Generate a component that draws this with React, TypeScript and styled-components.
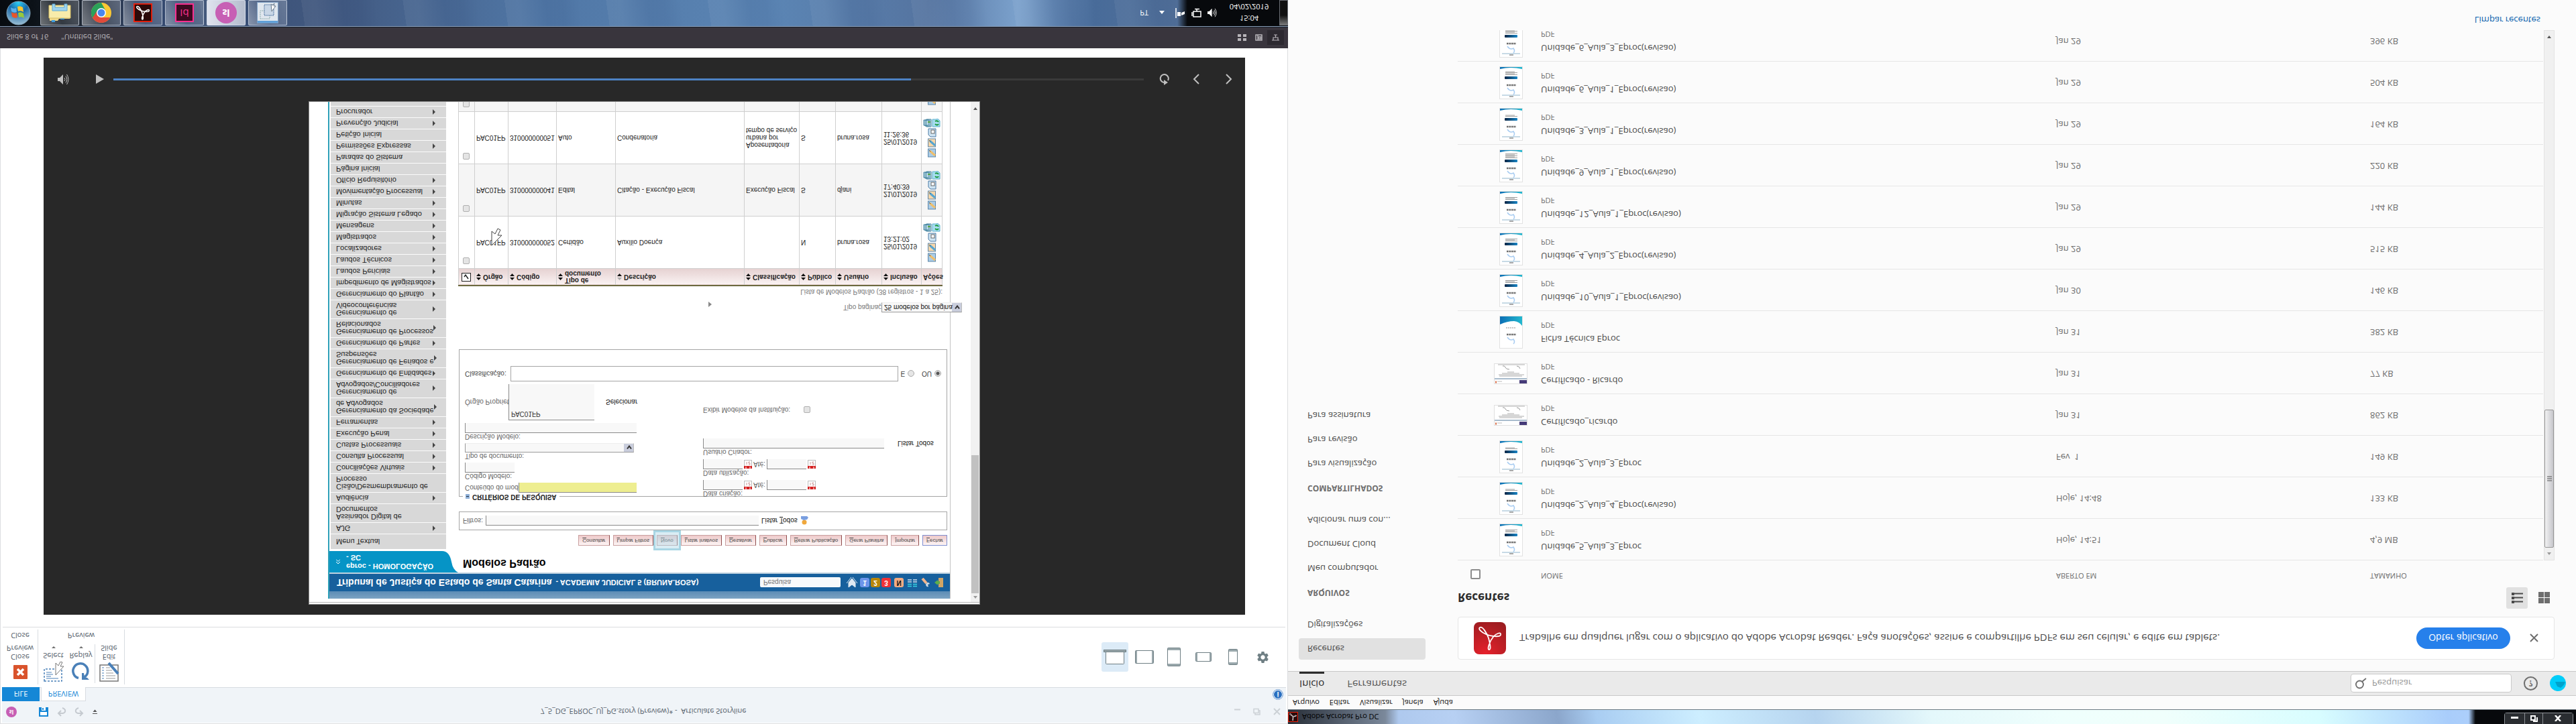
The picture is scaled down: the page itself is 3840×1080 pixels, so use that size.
import React from "react";
import styled, { createGlobalStyle, css } from "styled-components";
import { MdSettings } from "react-icons/md";

const ui = `"Open Sans", "Noto Sans", sans-serif`;
const web = `"Liberation Sans", Arial, sans-serif`;

const Global = createGlobalStyle`
  *, *::before, *::after { box-sizing: border-box; }
  html, body { margin: 0; background: #fff; }
  button, input, select { font: inherit; color: inherit; margin: 0; border-radius: 0; }
  button { border: 0; background: none; padding: 0; }
  svg { display: block; flex: none; }
  a { color: inherit; text-decoration: none; }
`;

/* Both desktops are mirrored top to bottom */
const Desktop = styled.div`
  display: grid;
  grid-template-columns: 1fr 1fr;
  height: 100vh;
  overflow: hidden;
  transform: scaleY(-1);
  font-family: ${ui};
`;

/* ---------- Storyline window ---------- */
const Screen = styled.section`
  display: flex;
  flex-direction: column;
  min-width: 0;
  min-height: 0;
  background: #fff;
`;
const StoryWindow = styled.div`
  flex: 1;
  min-height: 0;
  display: flex;
  flex-direction: column;
  border: 1px solid #dcdee0;
  border-bottom: 0;
`;
const TitleBar = styled.header`
  display: grid;
  grid-template-columns: 1fr auto 1fr;
  align-items: center;
  height: 32px;
  margin: 1px 2px 0;
  padding: 0 8px 0 6px;
  background: #f0f4f8;
  color: #56616b;
  font-size: 11px;
  white-space: pre;
`;
const QuickAccess = styled.div`
  display: flex;
  align-items: center;
  gap: 12px;
  button:first-of-type { margin-left: 21px; }
`;
const SlBadge = styled.span<{ $size: number }>`
  display: grid;
  place-items: center;
  width: ${(p) => p.$size}px;
  height: ${(p) => p.$size}px;
  border-radius: 50%;
  background: #c75fb4;
  color: #fff;
  font-size: ${(p) => (p.$size > 20 ? 14 : 8)}px;
  font-weight: 700;
  line-height: 1;
`;
const WindowButtons = styled.div`
  display: flex;
  justify-content: flex-end;
  align-items: center;
  gap: 19px;
`;
const TabBar = styled.nav`
  display: flex;
  align-items: stretch;
  gap: 2px;
  height: 21px;
  margin: 0 2px;
  background: #f0f4f8;
  border-bottom: 1px solid #d8dce1;
`;
const RibbonTab = styled.button<{ $file?: boolean }>`
  height: 21px;
  font-size: 11px;
  line-height: 20px;
  ${(p) =>
    p.$file
      ? css`width: 56px; background: #1587d6; color: #fff;`
      : css`width: 67px; background: #fff; color: #1587d6; border: 1px solid #d8dce1; border-bottom: 0;`}
`;
const InfoDot = styled.span`
  display: grid;
  place-items: center;
  width: 16px;
  height: 16px;
  margin: 2px 4px 0 auto;
  border-radius: 50%;
  border: 1px solid #8fb3dd;
  box-shadow: inset 0 0 0 1px #fff;
  background: #2a6fc0;
  color: #fff;
  font-size: 10px;
  font-weight: 700;
  line-height: 1;
`;
const Ribbon = styled.div`
  display: flex;
  height: 90px;
  margin: 0 3px;
  border-bottom: 1px solid #dadcde;
  font-size: 11px;
  color: #56616b;
`;
const RibbonGroup = styled.div<{ $w: number }>`
  display: flex;
  flex-direction: column;
  align-items: center;
  width: ${(p) => p.$w}px;
  margin: 4px 0 3px;
  border-right: 1px solid #d8dce1;
  padding-top: 2px;
`;
const RibbonTools = styled.div`
  display: flex;
  flex: 1;
`;
const RibbonTool = styled.button<{ $w: number; $line?: boolean }>`
  display: flex;
  flex-direction: column;
  align-items: center;
  width: ${(p) => p.$w}px;
  height: 58px;
  line-height: 13px;
  border-right: ${(p) => (p.$line ? "1px solid #d8dce1" : "0")};
`;
const ToolIcon = styled.span`
  display: grid;
  place-items: center;
  height: 34px;
`;
const DownArrow = styled.span`
  width: 0;
  margin-top: 5px;
  border: 3px solid transparent;
  border-top-color: #707070;
  border-bottom: 0;
`;
const GroupName = styled.span`
  line-height: 18px;
`;
const DeviceBar = styled.div`
  display: flex;
  align-items: center;
  gap: 4px;
  margin: 0 14px 0 auto;
`;
const DeviceButton = styled.button<{ $active?: boolean }>`
  display: grid;
  place-items: center;
  width: 40px;
  height: 44px;
  border-radius: 3px;
  background: ${(p) => (p.$active ? "#dcebf7" : "transparent")};
  color: #76858a;
`;
const Player = styled.main`
  flex: 1;
  min-height: 0;
  display: flex;
  flex-direction: column;
  margin: 18px 63px 14px 64px;
  padding-top: 15px;
  background: #282828;
`;
const Controls = styled.div`
  display: flex;
  align-items: center;
  flex: none;
  height: 65px;
  padding: 0 5px 0 21px;
  color: #bfbfbf;
`;
const ControlButton = styled.button<{ $w: number }>`
  display: grid;
  place-items: center;
  width: ${(p) => p.$w}px;
  height: 24px;
`;
const PlayButton = styled(ControlButton)`
  justify-content: end;
  padding-right: 3px;
`;
const SeekBar = styled.div`
  flex: 1;
  height: 3px;
  margin: 0 12px 0 11px;
  background: #3a3a3a;
`;
const Played = styled.div`
  height: 3px;
  background: #4d82c4;
`;
const StatusBar = styled.footer`
  display: flex;
  align-items: center;
  gap: 19px;
  height: 32px;
  padding: 0 6px 0 10px;
  background: #39353d;
  color: #b7b4b9;
  font-size: 11px;
`;
const ViewButtons = styled.div`
  display: flex;
  margin-left: auto;
`;
const ViewButton = styled.button<{ $active?: boolean }>`
  display: grid;
  place-items: center;
  width: 25px;
  height: 22px;
  background: ${(p) => (p.$active ? "#2c2930" : "transparent")};
  color: #b7b4b9;
`;

/* ---------- Taskbar ---------- */
const Taskbar = styled.nav`
  display: flex;
  align-items: center;
  height: 40px;
  flex: none;
  padding-left: 9px;
  border-top: 1px solid #8d9fb8;
  box-shadow: 0 -1px 0 #141c28;
  background:
    linear-gradient(90deg, #070b10 0, #0c1218 50px, rgba(30,36,44,0.8) 130px, transparent 220px),
    linear-gradient(90deg, transparent 0, transparent calc(100% - 165px), #07090c calc(100% - 150px)),
    repeating-linear-gradient(98deg, rgba(255,255,255,0.05) 0 20px, rgba(20,40,90,0.07) 60px 85px, transparent 110px 150px),
    linear-gradient(90deg, #2b3d60 0, #41587f 25%, #5077a6 42%, #5b85b4 60%, #5574a0 72%, #7ba1cc 79%, #486b99 85%, #60799c 100%);
`;
const TaskButton = styled.button<{ $active?: boolean }>`
  display: grid;
  place-items: center;
  width: 58px;
  height: 38px;
  margin-right: 4px;
  border: 1px solid rgba(220, 228, 240, 0.65);
  border-radius: 2px;
  background: ${(p) =>
    p.$active
      ? "linear-gradient(90deg, #dfe3ee, #b4bccd)"
      : "linear-gradient(115deg, rgba(255,255,255,0.4), rgba(255,255,255,0.12) 45%, rgba(255,255,255,0.22))"};
`;
const StartButton = styled.button`
  width: 37px;
  margin-right: 14px;
`;
const Tray = styled.div`
  display: flex;
  align-items: center;
  gap: 9px;
  margin-left: auto;
  color: #fff;
  font-size: 11px;
`;
const Clock = styled.time`
  display: flex;
  flex-direction: column;
  align-items: center;
  width: 72px;
  margin-left: 3px;
  line-height: 17px;
`;
const ShowDesktop = styled.button`
  width: 13px;
  height: 38px;
  border: 1px solid #6a6e75;
  background: linear-gradient(#777, #111 40%);
`;

/* ---------- Slide: court web page ---------- */
const Slide = styled.article`
  width: 100%;
  max-width: 1001px;
  margin: 0 auto;
  flex: 1;
  min-height: 0;
  overflow: hidden;
  border: 1px solid #8a8a8a;
  padding-top: 2px;
  background: #fff;
  color: #1d1d1d;
  font-family: ${web};
  font-size: 10px;
`;
const Viewport = styled.div`
  display: flex;
  height: 100%;
  border-top: 1px solid #b5b5b5;
`;
const CourtPage = styled.div`
  flex: 1;
  min-width: 0;
  margin: 5px 30px 0 28px;
  border-left: 2px solid #2fa0b8;
  border-right: 1px solid #c4c4c4;
`;
const SlideScroll = styled.div`
  display: flex;
  flex-direction: column;
  align-items: center;
  width: 13px;
  padding: 5px 0 8px;
  background: #f1f1f1;
`;
const SlideThumb = styled.div`
  width: 11px;
  height: 206px;
  margin: 4px 0 auto;
  background: #c1c1c1;
`;
const Arrow = styled.span<{ $down?: boolean }>`
  width: 0;
  border: 3px solid transparent;
  ${(p) => (p.$down ? "border-top: 4px solid #555; border-bottom: 0;" : "border-bottom: 4px solid #999; border-top: 0;")}
`;
const HeadStrip = styled.div`
  height: 11px;
  background: linear-gradient(#7ca3c3, #5c8cb5);
`;
const CourtHead = styled.div`
  display: flex;
  align-items: center;
  height: 28px;
  padding: 0 10px 0 11px;
  border-bottom: 2px solid #bfd2e0;
  background: #17609d;
  color: #fff;
  font-size: 11px;
  font-weight: 700;
  white-space: nowrap;
`;
const CourtName = styled.h1`
  margin: 0 6px 0 0;
  font-size: 14px;
`;
const CourtSearch = styled.input`
  width: 120px;
  height: 15px;
  margin: 0 8px 0 auto;
  padding: 0 5px;
  border: 0;
  border-radius: 2px;
  background: #f7f9fb;
  font-size: 10px;
  font-weight: 400;
`;
const Level = styled.span<{ $bg: string; $fg?: string }>`
  width: 14px;
  height: 14px;
  margin-right: 2px;
  border-radius: 3px;
  background: ${(p) => p.$bg};
  color: ${(p) => p.$fg || "#fff"};
  font-size: 10px;
  line-height: 14px;
  text-align: center;
`;
const HeadIcons = styled.span`
  display: flex;
  gap: 6px;
  margin-left: 4px;
`;
const CourtBody = styled.div`
  display: grid;
  grid-template-columns: 192px 1fr;
`;
const SystemTab = styled.div`
  display: flex;
  align-items: center;
  gap: 9px;
  height: 32px;
  padding-left: 10px;
  background: #0694c6;
  clip-path: path("M0 0H192Q184 4 182 16Q179 32 168 32H0Z");
  color: #fff;
  font-size: 11px;
  font-weight: 700;
  line-height: 13px;
`;
const MenuList = styled.ul`
  width: 172px;
  margin: 3px 0 0 2px;
  padding: 0;
  list-style: none;
  font-size: 11px;
  line-height: 11px;
`;
const MenuItem = styled.li<{ $h: number }>`
  display: flex;
  align-items: center;
  justify-content: space-between;
  height: ${(p) => p.$h}px;
  padding: 0 16px 0 8px;
  border-bottom: 1px solid #fbfbfb;
  background: #d8d8d8;
  white-space: pre;
`;
const MenuArrow = styled.span`
  width: 0;
  border: 4px solid transparent;
  border-left-color: #444;
  border-right: 0;
`;
const Content = styled.div`
  padding-right: 4px;
`;
const PageTitle = styled.h2`
  margin: 0 0 12px 7px;
  color: #000;
  font-size: 16px;
  line-height: 28px;
`;
const Actions = styled.div`
  display: flex;
  justify-content: flex-end;
  gap: 5px;
`;
const ActionButton = styled.button<{ $focus?: boolean }>`
  position: relative;
  height: 16px;
  padding: 0 5px;
  border: 1px solid ${(p) => (p.$focus ? "#7f8fd0" : "#c9a0a0")};
  border-right-color: ${(p) => (p.$focus ? "#7f8fd0" : "#8f4d4d")};
  background: linear-gradient(#fdf5f5, #eec9c9);
  color: #444;
  font-size: 8px;
  line-height: 12px;
  white-space: nowrap;
  &::first-letter { text-decoration: underline; }
`;
const Highlight = styled.span`
  position: absolute;
  inset: -8px -6px;
  border: 3px solid #a9d6e4;
  background: rgba(173, 216, 230, 0.45);
`;
const FilterBox = styled.div`
  display: flex;
  align-items: center;
  gap: 4px;
  height: 28px;
  margin: 7px 0 16px 1px;
  padding: 0 5px;
  border: 1px solid #a5a5a5;
  color: #666;
  font-size: 10px;
`;
const Field = styled.input<{ $w?: number; $yellow?: boolean }>`
  width: ${(p) => (p.$w ? p.$w + "px" : "100%")};
  height: 15px;
  padding: 0 3px;
  border: 0;
  border-left: 1px solid #8a8a8a;
  border-top: 1px solid #8a8a8a;
  background: ${(p) => (p.$yellow ? "#eeee90" : "#f8f8f8")};
`;
const TextLink = styled.a`
  color: #111;
  white-space: nowrap;
`;
const Criteria = styled.fieldset`
  display: block;
  min-width: 0;
  margin: 0 0 55px 1px;
  padding: 0 8px 24px;
  border: 1px solid #a5a5a5;
  color: #666;
  font-size: 10px;
  line-height: 11px;
`;
const CriteriaTitle = styled.legend`
  display: flex;
  align-items: center;
  gap: 4px;
  margin-left: -3px;
  padding: 0 4px;
  color: #222;
  font-weight: 700;
  line-height: 12px;
`;
const FormColumns = styled.div`
  display: grid;
  grid-template-columns: 355px 1fr;
`;
const FormColumn = styled.div<{ $lift?: boolean }>`
  display: flex;
  flex-direction: column;
  gap: ${(p) => (p.$lift ? 5 : 4)}px;
  margin-top: ${(p) => (p.$lift ? "-7px" : "0")};
`;
const FieldGroup = styled.div<{ $top?: number }>`
  display: flex;
  flex-direction: column;
  align-items: flex-start;
  margin-top: ${(p) => p.$top || 0}px;
`;
const Inline = styled.div<{ $gap?: number }>`
  display: flex;
  align-items: center;
  gap: ${(p) => p.$gap || 0}px;
  label { white-space: nowrap; flex: none; }
`;
const FixedLabel = styled.label<{ $w: number }>`
  width: ${(p) => p.$w}px;
`;
const selectLook = css`
  appearance: none;
  padding: 0 3px;
  border: 1px solid #9a9a9a;
  border-right-color: #bbb;
  border-bottom-color: #eee;
  background: #f8f8f8 linear-gradient(#c9cddc, #c9cddc) right / 14px 100% no-repeat;
  color: #111;
`;
const SelectWrap = styled.span`
  position: relative;
  display: inline-flex;
  svg { position: absolute; right: 3px; top: 4px; }
`;
const TypeSelect = styled.select`
  ${selectLook}
  width: 252px;
  height: 14px;
`;
const PageSelect = styled.select`
  ${selectLook}
  width: 120px;
  height: 15px;
`;
const OwnerList = styled.div`
  width: 128px;
  height: 54px;
  margin-right: 17px;
  padding: 3px;
  border-left: 1px solid #8a8a8a;
  border-top: 1px solid #8a8a8a;
  background: #f8f8f8;
  color: #333;
`;
const ClassRow = styled.div`
  display: flex;
  align-items: center;
  gap: 4px;
  margin-top: 4px;
  label { color: #444; white-space: nowrap; }
`;
const ClassInput = styled.input`
  flex: 1;
  min-width: 0;
  height: 23px;
  border: 1px solid #a5a5a5;
`;
const Radio = styled.input`
  appearance: none;
  width: 10px;
  height: 10px;
  border: 1px solid #a9a9a9;
  border-radius: 50%;
  background: #e6e6e6;
  &:checked { background: radial-gradient(#555 0 2px, #ddd 3px); }
`;
const Check = styled.input`
  appearance: none;
  display: block;
  width: 10px;
  height: 10px;
  border: 1px solid #b0b0b0;
  border-radius: 2px;
  background: #e4e4e4;
`;
const Paging = styled.div`
  display: flex;
  align-items: center;
  height: 14px;
  margin-right: -22px;
  color: #777;
  label { margin-left: auto; }
`;
const PagingMark = styled.span`
  margin: 10px 0 0 373px;
  border: 4px solid transparent;
  border-left: 5px solid #888;
  border-right: 0;
`;
const Models = styled.table`
  width: 722px;
  border-collapse: collapse;
  table-layout: fixed;
  caption {
    padding: 10px 0 1px;
    color: #777;
    line-height: 14px;
    text-align: right;
  }
  th, td { border: 1px solid #cfcfcf; padding: 0 2px; text-align: left; }
  tr { height: 78px; }
  thead tr { height: 25px; background: linear-gradient(#faf2f2, #e6d2d2); border-top: 2px solid #6d6a3f; }
  th { line-height: 10px; white-space: pre; color: #222; }
  th:first-child { padding-left: 4px; }
  tbody tr:nth-child(even) { background: #f5f5f5; }
`;
const HeadCell = styled.span`
  display: flex;
  align-items: center;
  gap: 3px;
`;
const CheckCell = styled.td`
  vertical-align: top;
  input { margin: 6px 0 0 4px; }
`;
const RowActions = styled.div`
  display: flex;
  flex-wrap: wrap;
  justify-content: center;
  gap: 1px 0;
  margin: 0 -2px;
  button { width: 13px; height: 14px; }
  button:nth-child(-n + 3) { margin: 0 8px; }
`;
const Cursor = styled.svg`
  position: absolute;
  left: 22px;
  top: 0;
`;
const CursorCell = styled.span`
  position: relative;
  display: block;
`;

/* ---------- Acrobat window ---------- */
const AcrobatScreen = styled(Screen)`
  background: #fbfbfb;
  color: #4b4b4b;
  font-size: 13px;
`;
const GlassBar = styled.header`
  display: flex;
  align-items: center;
  gap: 6px;
  height: 22px;
  flex: none;
  border-bottom: 1px solid #6f7c84;
  background:
    linear-gradient(90deg, rgba(20,22,26,0.85) 0, rgba(90,95,100,0.6) 145px, transparent 165px),
    linear-gradient(90deg, transparent calc(100% - 160px), #07090c calc(100% - 150px)),
    linear-gradient(100deg, #9dbbe4 0, #b7d0f3 13%, #8ba6cb 21%, #a9cdf2 24%, #cdeeff 32%, #b6d4ef 41%, #e4f8fb 50%, #effffd 60%, #f0fffc 68%, #d8fdff 80%, #a9cdfb 90%, #bbd5fa 100%);
  color: #000;
  font-size: 11px;
`;
const GlassButtons = styled.div`
  display: flex;
  align-self: stretch;
  margin: 0 4px 4px auto;
  border: 1px solid #8b8f94;
  border-top: 0;
  border-radius: 0 0 4px 4px;
`;
const GlassButton = styled.button<{ $w: number }>`
  display: grid;
  place-items: center;
  width: ${(p) => p.$w}px;
  background: #2a2d31;
  & + & { border-left: 1px solid #8b8f94; }
`;
const MenuBar = styled.nav`
  display: flex;
  gap: 15px;
  height: 20px;
  flex: none;
  padding-left: 7px;
  color: #111;
  font-size: 11px;
  line-height: 20px;
`;
const AppBar = styled.div`
  display: flex;
  align-items: center;
  height: 37px;
  flex: none;
  padding: 0 15px 0 17px;
  border: solid #c8c8c8;
  border-width: 1px 0;
  background: #eaeaea;
  font-size: 15px;
`;
const AppTab = styled.button<{ $active?: boolean }>`
  height: 35px;
  margin-right: 34px;
  color: ${(p) => (p.$active ? "#2c2c2c" : "#5a5a5a")};
  border-bottom: 3px solid ${(p) => (p.$active ? "#2c2c2c" : "transparent")};
`;
const SearchBox = styled.label`
  display: flex;
  align-items: center;
  gap: 8px;
  width: 240px;
  height: 28px;
  margin: 0 18px 0 auto;
  padding: 0 6px;
  border: 1px solid #cacaca;
  border-radius: 4px;
  background: #fff;
  input { width: 180px; border: 0; padding: 0; font-size: 13px; outline: 0; }
  input::placeholder { color: #959595; }
`;
const Help = styled.button`
  width: 21px;
  height: 21px;
  margin-right: 18px;
  border: 2px solid #6e6e6e;
  border-radius: 50%;
  color: #6e6e6e;
  font-size: 12px;
  font-weight: 700;
  line-height: 16px;
`;
const Workspace = styled.div`
  flex: 1;
  min-height: 0;
  display: grid;
  grid-template-columns: 237px 1fr;
`;
const Sidebar = styled.nav`
  display: flex;
  flex-direction: column;
  align-items: stretch;
  padding: 15px 32px 0 16px;
  font-size: 13px;
  white-space: nowrap;
`;
const SideItem = styled.a<{ $active?: boolean }>`
  height: 32px;
  margin: 2px 0;
  padding-left: 13px;
  border-radius: 4px;
  background: ${(p) => (p.$active ? "#e1e1e1" : "transparent")};
  line-height: 32px;
`;
const SideHeading = styled.h3`
  height: 37px;
  margin: 11px 0 0 13px;
  color: #6e6e6e;
  font-size: 12px;
  font-weight: 700;
  line-height: 37px;
`;
const Files = styled.main`
  display: flex;
  flex-direction: column;
  min-width: 0;
  min-height: 0;
  margin: 17px 32px 0 16px;
`;
const Banner = styled.div`
  display: flex;
  align-items: center;
  gap: 20px;
  height: 64px;
  flex: none;
  padding: 0 23px;
  border: 1px solid #e6e6e6;
  border-radius: 4px;
  background: #fff;
  font-size: 15px;
`;
const PrimaryButton = styled.button`
  height: 32px;
  width: 140px;
  margin: 0 9px 0 auto;
  border-radius: 16px;
  background: #2680eb;
  color: #fff;
  font-size: 14px;
`;
const FilesHead = styled.div`
  display: flex;
  align-items: center;
  gap: 8px;
  height: 32px;
  flex: none;
  margin: 12px 0 9px;
  h2 { margin: 0 auto 0 0; color: #2c2c2c; font-size: 17px; font-weight: 700; }
`;
const LayoutButton = styled.button<{ $active?: boolean }>`
  display: grid;
  place-items: center;
  width: 32px;
  height: 32px;
  border-radius: 3px;
  background: ${(p) => (p.$active ? "#e1e1e1" : "transparent")};
`;
const Scroller = styled.div`
  position: relative;
  flex: 1;
  min-height: 0;
  overflow: hidden;
  padding-right: 17px;
`;
const FileTable = styled.table`
  width: 100%;
  border-collapse: collapse;
  table-layout: fixed;
  th, td { padding: 0; text-align: left; font-weight: 400; }
  th { height: 31px; color: #6e6e6e; font-size: 11px; vertical-align: top; }
  th input { appearance: none; display: block; width: 15px; height: 15px; margin: 3px 0 0 19px; border: 2px solid #8c8c8c; border-radius: 2px; background: #fff; }
  tbody tr { height: 62px; border-top: 1px solid #e6e6e6; }
  td { padding-bottom: 2px; color: #6e6e6e; font-size: 13px; }
`;
const FileName = styled.span`
  display: block;
  color: #4b4b4b;
  line-height: 22px;
`;
const FileKind = styled.span`
  display: block;
  font-size: 11px;
  line-height: 20px;
`;
const Opened = styled.td`
  white-space: pre;
`;
const ThumbCell = styled.td`
  svg { margin: 0 auto; }
`;
const FileScroll = styled.div`
  position: absolute;
  top: 31px;
  right: 0;
  bottom: 0;
  display: flex;
  flex-direction: column;
  align-items: center;
  justify-content: space-between;
  width: 16px;
  padding: 7px 0;
  border: 1px solid #e3e3e3;
  background: #f0f0f0;
`;
const FileThumb = styled.div`
  display: grid;
  place-items: center;
  width: 14px;
  height: 206px;
  margin: 7px 0 auto;
  border: 1px solid #979797;
  border-radius: 2px;
  background: linear-gradient(90deg, #f2f2f2, #dcdcdf 50%, #c6c6cb);
`;
const ClearRow = styled.div`
  flex: none;
  height: 45px;
  padding-right: 21px;
  color: #0b62ad;
  font-size: 13px;
  line-height: 30px;
  text-align: right;
`;

/* ---------- Drawings ---------- */
const AcroMark = ({ s = 48, bg = "#d81e26", frame = "" }: { s?: number; bg?: string; frame?: string }) => (
  <svg width={s} height={s} viewBox="0 0 48 48">
    <defs>
      <radialGradient id="acro" cx="0.35" cy="0" r="1.1">
        <stop offset="0" stopColor="#e8212b" />
        <stop offset="1" stopColor="#9a1c20" />
      </radialGradient>
    </defs>
    <rect width="48" height="48" rx={frame ? 0 : 8} fill={frame ? bg : "url(#acro)"} stroke={frame || "none"} strokeWidth="6" />
    <path
      d="M23 7c-4 0 1 13 6 19 4 5 12 8 11 3-1-4-16-2-22 1-7 3-12 8-9 10 4 3 11-10 13-16 2-7 4-17 1-17z"
      fill="none" stroke="#fff" strokeWidth={frame ? 2.6 : 1.8}
    />
  </svg>
);
const AdobeIcon = () => <AcroMark s={28} bg="#2a0a0a" frame="#f5210c" />;
const SmallAdobe = () => <AcroMark s={15} bg="#2a0a0a" frame="#f5210c" />;

const StartOrb = () => (
  <svg width="37" height="37" viewBox="0 0 37 37">
    <defs>
      <radialGradient id="orb" cx="0.5" cy="0.95" r="0.9">
        <stop offset="0" stopColor="#2fd0f5" />
        <stop offset="0.45" stopColor="#1668a8" />
        <stop offset="1" stopColor="#8fb6cf" />
      </radialGradient>
    </defs>
    <circle cx="18.500" cy="18.500" r="17.500" fill="url(#orb)" stroke="#7f9fb5" />
    <path d="M9 13q4-3 8-1l-1 7q-4-2-8 1z" fill="#e8542a" />
    <path d="M19 12q4 2 8-1l-1 7q-4 3-8 1z" fill="#97c93c" />
    <path d="M8 21q4-3 8-1l-1 6q-4-2-8 1z" fill="#5cb0ea" />
    <path d="M18 21q4 2 8-1l-1 7q-4 3-8 1z" fill="#fbc52d" />
  </svg>
);
const FolderIcon = () => (
  <svg width="34" height="30" viewBox="0 0 34 30">
    <path d="M2 3h12l2 3h16v20H2z" fill="#efd98a" />
    <path d="M5 1h5v3H5zM18 5h6v3h-6z" fill="#3c9be0" />
    <path d="M1 7h32v19H1z" fill="#f8ecaa" stroke="#d9bf62" />
    <path d="M6 18h22v10h-4v-5H10v5H6z" fill="#9ed3ee" stroke="#5fa9d4" />
  </svg>
);
const ChromeIcon = () => (
  <svg width="30" height="30" viewBox="0 0 30 30">
    <circle cx="15" cy="15" r="15" fill="#fbc834" />
    <path d="M15 15L2 7.500A15 15 0 0 0 15 30l6-11z" fill="#2aa15a" />
    <path d="M15 8h13.200A15 15 0 0 0 2 7.500L8 17z" fill="#e04a3b" />
    <circle cx="15" cy="15" r="7" fill="#fff" />
    <circle cx="15" cy="15" r="5.500" fill="#4a87ee" />
  </svg>
);
const IdIcon = styled.span`
  display: grid;
  place-items: center;
  width: 28px;
  height: 28px;
  border: 2px solid #f8308f;
  background: #3b0a20;
  color: #f8308f;
  font-size: 15px;
  line-height: 1;
`;
const SnipIcon = () => (
  <svg width="32" height="32" viewBox="0 0 32 32">
    <rect x="0.500" y="0.500" width="31" height="31" fill="#dfe6ee" stroke="#7d9fc4" />
    <rect x="1" y="1" width="30" height="3" fill="#5f9fd8" />
    <path d="M5 7h14v12H5z" fill="none" stroke="#8aa" strokeDasharray="2 1" />
    <path d="M11 12h14v16H11z" fill="#c8d6e6" stroke="#456a9a" strokeDasharray="2 1" />
    <path d="M22 18l6 8-3 0 1 4-3-3-2 2z" fill="#fff" stroke="#678" />
  </svg>
);
const SaveIcon = () => (
  <svg width="14" height="14" viewBox="0 0 14 14">
    <path d="M0 0h14v14H0z" fill="#1587d6" />
    <path d="M2 2h10v5H2zM4 9h6v5H4z" fill="#fff" />
    <path d="M5 10h2v3H5z" fill="#1587d6" />
  </svg>
);
const UndoIcon = ({ flip }: { flip?: boolean }) => (
  <svg width="15" height="14" viewBox="0 0 15 14">
    <path
      d={flip ? "M8 1l4 4-4 4M12 5H5q-4 1-3 5 1 2 4 3" : "M7 1L3 5l4 4M3 5h7q4 1 3 5-1 2-4 3"}
      fill="none" stroke="#c5cad0" strokeWidth="2"
    />
  </svg>
);
const CloseRed = () => (
  <svg width="21" height="21" viewBox="0 0 21 21">
    <rect width="21" height="21" rx="1" fill="#d9532c" />
    <path d="M6 6l9 9M15 6l-9 9" stroke="#fff" strokeWidth="3.500" />
  </svg>
);
const SelectIcon = () => (
  <svg width="30" height="30" viewBox="0 0 30 30" fill="none">
    <rect x="1" y="1" width="26" height="18" stroke="#4a80b8" strokeWidth="1.500" strokeDasharray="3 2" />
    <path d="M4 5h18M4 8h7M4 11h10M4 14h8" stroke="#4a80b8" />
    <path d="M18 10v18l4-4 3 6 3-1-3-6h5z" fill="#fff" stroke="#777" />
  </svg>
);
const ReplayIcon = () => (
  <svg width="27" height="27" viewBox="0 0 27 27" fill="none">
    <path d="M10 3.500A11 11 0 1 0 19 5" stroke="#4a80b8" strokeWidth="3.500" />
    <path d="M15 1h11l-3 3-4 1-1 6h-3z" fill="#4a80b8" />
  </svg>
);
const EditIcon = () => (
  <svg width="30" height="30" viewBox="0 0 30 30" fill="none">
    <rect x="1" y="2" width="27" height="24" fill="#fff" stroke="#777" strokeWidth="1.500" />
    <path d="M4 6h3M4 10h3M4 14h3M4 18h3M4 22h3" stroke="#4a80b8" />
    <path d="M10 6h14M10 10h14M10 14h11M10 18h9M10 22h6" stroke="#999" />
    <path d="M28 13L14 29" stroke="#4a80b8" strokeWidth="4" />
  </svg>
);
const Device = ({ w, h, side, stand }: { w: number; h: number; side?: boolean; stand?: boolean }) => (
  <svg width={w + 6} height={h} viewBox={`0 0 ${w + 6} ${h}`}>
    <rect x="3.500" y="0.500" width={w - 1} height={h - 1} rx="1" fill="#9aa8ac" stroke="#6f7f84" />
    {side ? <rect x="6" y="1" width={w - 6} height={h - 2} fill="#fff" /> : <rect x="4" y={stand ? 1 : 4} width={w - 2} height={stand ? h - 5 : h - 8} fill="#fff" />}
    {stand && <rect x="0.500" y={h - 3.500} width={w + 5} height="3" fill="#9aa8ac" stroke="#6f7f84" />}
  </svg>
);
const SpeakerIcon = ({ c = "currentColor", s = 17 }: { c?: string; s?: number }) => (
  <svg width={s} height={s} viewBox="0 0 17 17" fill="none" stroke={c}>
    <path d="M0 6h3l5-5v15l-5-5H0z" fill={c} stroke="none" />
    <path d="M10 6q2 2.500 0 5M12 3.500q3.500 5 0 10M13.500 1q5 7.500 0 15" />
  </svg>
);
const Sort = ({ dim }: { dim?: boolean }) => (
  <svg width="7" height="12" viewBox="0 0 7 12">
    <path d="M0 5l3.500-4L7 5z" fill={dim ? "#aaa" : "#111"} />
    <path d="M0 7l3.500 4L7 7z" fill="#111" />
  </svg>
);
const Chevron = () => (
  <svg width="8" height="7" viewBox="0 0 8 7"><path d="M1 1.500l3 4 3-4" fill="none" stroke="#333" strokeWidth="2" /></svg>
);
const Calendar = () => (
  <svg width="12" height="13" viewBox="0 0 12 13">
    <rect x="0.500" y="0.500" width="11" height="12" fill="#fff" stroke="#bbb" />
    <path d="M0 0h12v4H0z" fill="#d42020" />
    <path d="M3 0v3M9 0v3" stroke="#fff" />
    <path d="M4 6v4M7 6h2v2H7v2h2" fill="none" stroke="#c99" />
  </svg>
);
const DocIcon = ({ bg, pen }: { bg: string; pen: string }) => (
  <svg width="13" height="14" viewBox="0 0 13 14">
    <rect x="0.500" y="1" width="11" height="12" fill={bg} stroke="#5f87a8" />
    <path d="M3 10l8-7" stroke={pen} strokeWidth="3" />
    <path d="M2 11l2-2" stroke="#444" />
  </svg>
);
const ViewIcon = () => (
  <svg width="13" height="14" viewBox="0 0 13 14">
    <path d="M1 4l3-3h8v12H1z" fill="#cfe4f2" stroke="#4b7ba5" />
    <rect x="5" y="6" width="5" height="5" fill="#fff" stroke="#666" />
  </svg>
);
const CopyIcon = () => (
  <svg width="13" height="14" viewBox="0 0 13 14">
    <path d="M1 3h7v8H1zM3 2h7v9H3zM5 1h7v11H5z" fill="#d8edf5" stroke="#3c7f9c" />
    <path d="M7 8h4" stroke="#5aa844" strokeWidth="2" />
  </svg>
);
const RecycleIcon = () => (
  <svg width="13" height="14" viewBox="0 0 13 14">
    <path d="M1 1h11v9q-3 4-6 2H1z" fill="#a9def0" stroke="#5ab0cc" />
    <path d="M5 5q3-3 5 0M10 8q-2 3-5 1" fill="none" stroke="#189a3c" strokeWidth="2" />
  </svg>
);
/* Page miniature: logo, title tag, summary lines and a wave at the foot */
const DocThumb = ({ lines = 2, cover }: { lines?: number; cover?: boolean }) => (
  <svg width="35" height="49" viewBox="0 0 35 49">
    <defs>
      <linearGradient id="wave"><stop offset="0" stopColor="#0c6fb5" /><stop offset="1" stopColor="#22b8cf" /></linearGradient>
      <linearGradient id="tag"><stop offset="0" stopColor="#0b2545" /><stop offset="1" stopColor="#1a86c6" /></linearGradient>
    </defs>
    <rect x="0.500" y="0.500" width="34" height="48" fill="#fff" stroke="#e2e2e2" />
    <path d={cover ? "M1 48h33V34q-4 6-12 7-10 0-21-5z" : "M1 48h33v-3q-17 4-33 0z"} fill="url(#wave)" />
    {!cover && <path d="M4 6h27" stroke="#8fb4cc" />}
    {!cover && <path d="M15 4h6" stroke="#555" />}
    <path d="M12 17q4-6 9-3 3-4 0-7" fill="none" stroke="#a9cdf2" strokeWidth="1.500" />
    <path d="M11 21h14" stroke="#666" strokeWidth="2.500" strokeDasharray="2 0.7" />
    {!cover && <rect x="8" y="30" width="19" height="4" rx="1" fill="url(#tag)" />}
    {!cover && Array.from({ length: lines }, (_, i) => <path key={i} d={`M9 ${36.5 + i * 1.5}h${18 - (i % 2) * 4}`} stroke="#777" strokeWidth="0.700" />)}
    {cover && <path d="M10 31h15" stroke="#888" strokeDasharray="2 1" />}
  </svg>
);
const CertThumb = () => (
  <svg width="50" height="31" viewBox="0 0 50 31">
    <rect x="0.500" y="0.500" width="49" height="30" fill="#fff" stroke="#e0e0e0" />
    <path d="M1 8h48" stroke="#a9bccd" strokeWidth="2" />
    <rect x="38" y="1" width="11" height="5" fill="#453a78" />
    <path d="M2 3h2" stroke="#d9704a" strokeWidth="3" />
    <path d="M5 4h7" stroke="#bbb" />
    <path d="M8 12h34M7 14h38M12 16h26M20 18h10M6 29h40" stroke="#999" strokeWidth="0.800" />
    <path d="M13 27q3 1 4-2t6-3M34 27q4 0 5-4" fill="none" stroke="#999" />
  </svg>
);

/* ---------- Data ---------- */
type Item = [string, boolean];
const menu: Item[] = [
  ["Menu Textual", false], ["AJG", true], ["Assinador Digital de\nDocumentos", false], ["Audiência", true],
  ["Cisão/Desmembramento de\nProcesso", false], ["Conciliações Virtuais", true], ["Consulta Processual", true],
  ["Custas Processuais", true], ["Execução Penal", true], ["Ferramentas", true],
  ["Gerenciamento da Sociedade\nde Advogados", true], ["Gerenciamento de\nAdvogados/Conciliadores", true],
  ["Gerenciamento de Entidades", true], ["Gerenciamento de Feriados e\nSuspensões", true],
  ["Gerenciamento de Partes", true], ["Gerenciamento de Processos\nRelacionados", true],
  ["Gerenciamento de\nVideoconferências", true], ["Gerenciamento do Plantão", true],
  ["Impedimento de Magistrados", true], ["Laudos Periciais", true], ["Laudos Técnicos", true],
  ["Localizadores", true], ["Magistrados", true], ["Mensagens", true], ["Migração Sistema Legado", true],
  ["Minutas", true], ["Movimentação Processual", true], ["Ofício Requisitório", true], ["Página Inicial", false],
  ["Paradas do Sistema", false], ["Permissões Expressas", true], ["Petição Inicial", false],
  ["Prevenção Judicial", true], ["Procurador", true], ["", false],
];
const actions = ["Consultar", "Limpar Filtros", "Novo", "Listar Inativos", "Desativar", "Publicar", "Retirar Publicação", "Gerar Planilha", "Importar", "Fechar"];
const columns = [["Órgão", 50], ["Código", 72], ["Tipo de\ndocumento", 88], ["Descrição", 192], ["Classificação", 82], ["Público", 54], ["Usuário", 69], ["Inclusão", 59]] as const;
const models = [
  ["PAC01FP", "310000000052", "Certidão", "Auxílio Doença", "", "N", "bruna.rosa", "25/01/2019 13:21:02"],
  ["PAC01FP", "310000000041", "Edital", "Citação - Execução Fiscal", "Execução Fiscal", "S", "djani", "21/01/2019 17:40:39"],
  ["PAC01FP", "310000000051", "Auto", "Condenatoria", "Aposentadoria urbana por tempo de serviço", "S", "bruna.rosa", "25/01/2019 11:26:36"],
  ["", "", "", "", "", "", "", ""],
];
const files: [string, string, string, number][] = [
  ["Unidade_5_Aula_3_Eproc", "Hoje, 14:51", "4,9 MB", 3],
  ["Unidade_2_Aula_4_Eproc(revisao)", "Hoje, 14:48", "133 KB", 2],
  ["Unidade_2_Aula_3_Eproc", "Fev  1", "149 KB", 2],
  ["Certificado_ricardo", "Jan 31", "862 KB", -1],
  ["Certificado - Ricardo", "Jan 31", "77 KB", -1],
  ["Ficha Técnica Eproc", "Jan 31", "382 KB", 0],
  ["Unidade_10_Aula_1_Eproc(revisao)", "Jan 30", "146 KB", 3],
  ["Unidade_4_Aula_2_Eproc(revisao)", "Jan 29", "515 KB", 3],
  ["Unidade_12_Aula_1_Eproc(revisao)", "Jan 29", "144 KB", 3],
  ["Unidade_9_Aula_1_Eproc(revisao)", "Jan 29", "220 KB", 5],
  ["Unidade_3_Aula_1_Eproc(revisao)", "Jan 29", "164 KB", 2],
  ["Unidade_6_Aula_1_Eproc(revisao)", "Jan 29", "504 KB", 4],
  ["Unidade_6_Aula_3_Eproc(revisao)", "Jan 29", "396 KB", 5],
];

const DateRange = ({ id, label }: { id: string; label: string }) => (
  <FieldGroup>
    <label htmlFor={id}>{label}</label>
    <Inline $gap={2}>
      <Field id={id} $w={59} /><Calendar />
      <label htmlFor={id + "-end"}>Até:</label>
      <Field id={id + "-end"} $w={59} /><Calendar />
    </Inline>
  </FieldGroup>
);

const Court = () => (
  <Slide>
    <Viewport>
      <CourtPage>
        <HeadStrip />
        <CourtHead>
          <CourtName>Tribunal de Justiça do Estado de Santa Catarina</CourtName>- ACADEMIA JUDICIAL 5 (BRUNA.ROSA)
          <CourtSearch aria-label="Pesquisa" placeholder="Pesquisa" />
          <svg width="18" height="17" viewBox="0 0 18 17"><path d="M9 5l-5-4v7l5 6 5-6V1zM1 7l7 9M17 7l-7 9" fill="#dfe9f2" stroke="#dfe9f2" /></svg>
          &nbsp;
          <Level $bg="#6d95ea">1</Level><Level $bg="#b8860b">2</Level><Level $bg="#f03236">3</Level>&nbsp;
          <Level $bg="#f2ab83" $fg="#111">N</Level>
          <HeadIcons>
            <svg width="14" height="14" viewBox="0 0 14 14"><path d="M0 1.500h6M8 1.500h6M0 4.500h6M8 4.500h6" stroke="#38d4e4" strokeWidth="1.500" /><path d="M0 8h6M8 8h6M0 11h6M8 11h6" stroke="#cfe0ee" strokeWidth="1.500" /></svg>
            <svg width="14" height="14" viewBox="0 0 14 14"><path d="M2 13l6-7" stroke="#f2b48a" strokeWidth="4" /><path d="M8 6a3 3 0 0 1 3-5l-1 3 3 1a3 3 0 0 1-5 1z" fill="#cdd9e2" /></svg>
            <svg width="13" height="14" viewBox="0 0 13 14"><path d="M6 0h7v14H6z" fill="#d2a564" /><path d="M0 7l5-4v2h3v4H5v2z" fill="#5fae4a" /></svg>
          </HeadIcons>
        </CourtHead>
        <CourtBody>
          <div>
            <SystemTab>
              <svg width="6" height="8" viewBox="0 0 6 8"><path d="M0 4l3-3 3 3M0 7.500l3-3 3 3" fill="none" stroke="#fff" /></svg>
              <span>eproc - HOMOLOGAÇÃO<br />- SC</span>
            </SystemTab>
            <MenuList>
              {menu.map(([name, more], i) => (
                <MenuItem key={i} $h={i === 0 ? 23 : name.includes("\n") ? 28 : 17}>
                  <a href="#">{name}</a>{more && <MenuArrow />}
                </MenuItem>
              ))}
            </MenuList>
          </div>
          <Content>
            <PageTitle>Modelos Padrão</PageTitle>
            <Actions>
              {actions.map((a) => (
                <ActionButton key={a} $focus={a === "Fechar"}>{a}{a === "Novo" && <Highlight />}</ActionButton>
              ))}
            </Actions>
            <FilterBox>
              <label htmlFor="filter">Filtros:</label>
              <Field id="filter" $w={407} />
              <TextLink href="#">Listar <u>T</u>odos</TextLink>
              <svg width="13" height="13" viewBox="0 0 13 13"><circle cx="6" cy="4" r="3.500" fill="#f0a83c" /><path d="M1 13V9l4-2 5 1 2 3-2 2z" fill="#7a9fe0" /></svg>
            </FilterBox>
            <Criteria>
              <CriteriaTitle>
                <svg width="6" height="7" viewBox="0 0 6 7"><rect width="6" height="7" fill="#8fb0d8" /><path d="M1 3.500h4" stroke="#234" /></svg>
                CRITÉRIOS DE PESQUISA
              </CriteriaTitle>
              <FormColumns>
                <FormColumn>
                  <Inline>
                    <FixedLabel $w={80} htmlFor="content">Conteúdo do mode</FixedLabel>
                    <Field id="content" $w={176} $yellow />
                  </Inline>
                  <FieldGroup>
                    <label htmlFor="code">Código Modelo:</label>
                    <Field id="code" $w={74} />
                  </FieldGroup>
                  <FieldGroup>
                    <label htmlFor="kind">Tipo de documento:</label>
                    <SelectWrap><TypeSelect id="kind" /><Chevron /></SelectWrap>
                  </FieldGroup>
                  <FieldGroup>
                    <label htmlFor="desc">Descrição Modelo:</label>
                    <Field id="desc" $w={256} />
                  </FieldGroup>
                  <Inline>
                    <FixedLabel $w={65}>Órgão Propriet</FixedLabel>
                    <OwnerList>PAC01FP</OwnerList>
                    <TextLink href="#">Selecionar</TextLink>
                  </Inline>
                </FormColumn>
                <FormColumn $lift>
                  <DateRange id="made" label="Data criação:" />
                  <DateRange id="used" label="Data utilização:" />
                  <FieldGroup>
                    <label htmlFor="owner">Usuário Criador:</label>
                    <Inline $gap={20}><Field id="owner" $w={270} /><TextLink href="#">Listar Todos</TextLink></Inline>
                  </FieldGroup>
                  <FieldGroup $top={32}>
                    <Inline $gap={20}><label htmlFor="inst">Exibir Modelos da Instituição:</label><Check type="checkbox" id="inst" /></Inline>
                  </FieldGroup>
                </FormColumn>
              </FormColumns>
              <ClassRow>
                <FixedLabel $w={64} htmlFor="class">Classificação:</FixedLabel>
                <ClassInput id="class" />
                <label htmlFor="and">E</label><Radio type="radio" name="op" id="and" />&nbsp;
                <label htmlFor="or">OU</label><Radio type="radio" name="op" id="or" defaultChecked />
              </ClassRow>
            </Criteria>
            <Paging>
              <PagingMark />
              <label htmlFor="paging">Tipo paginaç</label>
              <SelectWrap>
                <PageSelect id="paging"><option>25 modelos por página</option></PageSelect><Chevron />
              </SelectWrap>
            </Paging>
            <Models>
              <caption>Lista de Modelos Padrão (38 registros - 1 a 25):</caption>
              <colgroup>
                <col style={{ width: 24 }} />
                {columns.map(([n, w]) => <col key={n} style={{ width: w }} />)}
                <col />
              </colgroup>
              <thead>
                <tr>
                  <th><svg width="14" height="13" viewBox="0 0 14 13"><rect x="0.500" y="0.500" width="13" height="12" fill="#fff" stroke="#222" /><path d="M4 7l2 3 4-6" fill="none" stroke="#222" strokeWidth="1.500" /></svg></th>
                  {columns.map(([n]) => <th key={n}><HeadCell><Sort dim={n === "Descrição"} />{n}</HeadCell></th>)}
                  <th>Ações</th>
                </tr>
              </thead>
              <tbody>
                {models.map((m, r) => (
                  <tr key={r}>
                    <CheckCell><Check type="checkbox" aria-label={"Modelo " + m[1]} /></CheckCell>
                    {m.map((v, c) => (
                      <td key={c}>
                        {r === 0 && c === 0 ? (
                          <CursorCell>{v}<Cursor width="18" height="27" viewBox="0 0 18 27"><path d="M1 1v21l5-4 4 8 4-2-4-8h6z" fill="#fff" stroke="#444" /></Cursor></CursorCell>
                        ) : v}
                      </td>
                    ))}
                    <td>
                      <RowActions>
                        <button aria-label="Editar"><DocIcon bg="#a9cce8" pen="#f0bf6c" /></button>
                        <button aria-label="Alterar"><DocIcon bg="#f8d6a8" pen="#58a6d0" /></button>
                        <button aria-label="Visualizar"><ViewIcon /></button>
                        <button aria-label="Copiar"><CopyIcon /></button>
                        <button aria-label="Desativar"><RecycleIcon /></button>
                      </RowActions>
                    </td>
                  </tr>
                ))}
              </tbody>
            </Models>
          </Content>
        </CourtBody>
      </CourtPage>
      <SlideScroll><Arrow /><SlideThumb /><Arrow $down /></SlideScroll>
    </Viewport>
  </Slide>
);

const Storyline = () => (
  <Screen>
    <StoryWindow>
      <TitleBar>
        <QuickAccess>
          <SlBadge $size={16}>sl</SlBadge>
          <button aria-label="Save"><SaveIcon /></button>
          <button aria-label="Undo"><UndoIcon /></button>
          <button aria-label="Redo"><UndoIcon flip /></button>
          <svg width="7" height="7" viewBox="0 0 7 7"><path d="M0 .5h7" stroke="#555" /><path d="M.5 3h6l-3 3.500z" fill="#555" /></svg>
        </QuickAccess>
        <span>7_5_DG_EPROC_UJ_PG.story (Preview)* -  Articulate Storyline</span>
        <WindowButtons>
          <button aria-label="Minimize"><svg width="9" height="10" viewBox="0 0 9 10"><path d="M0 8.500h9" stroke="#ccd1d6" strokeWidth="2" /></svg></button>
          <button aria-label="Restore"><svg width="11" height="11" viewBox="0 0 11 11" fill="none" stroke="#ccd1d6" strokeWidth="1.500"><path d="M3 3V1h7v6H8M1 3.500h7v6H1z" /></svg></button>
          <button aria-label="Close"><svg width="11" height="11" viewBox="0 0 11 11"><path d="M1 1l9 9M10 1l-9 9" stroke="#ccd1d6" strokeWidth="2" /></svg></button>
        </WindowButtons>
      </TitleBar>
      <TabBar>
        <RibbonTab $file>FILE</RibbonTab>
        <RibbonTab>PREVIEW</RibbonTab>
        <InfoDot>i</InfoDot>
      </TabBar>
      <Ribbon>
        <RibbonGroup $w={53}>
          <RibbonTools><RibbonTool $w={52}><ToolIcon><CloseRed /></ToolIcon>Close<br />Preview</RibbonTool></RibbonTools>
          <GroupName>Close</GroupName>
        </RibbonGroup>
        <RibbonGroup $w={129}>
          <RibbonTools>
            <RibbonTool $w={42}><ToolIcon><SelectIcon /></ToolIcon>Select<DownArrow /></RibbonTool>
            <RibbonTool $w={41} $line><ToolIcon><ReplayIcon /></ToolIcon>Replay<DownArrow /></RibbonTool>
            <RibbonTool $w={42}><ToolIcon><EditIcon /></ToolIcon>Edit<br />Slide</RibbonTool>
          </RibbonTools>
          <GroupName>Preview</GroupName>
        </RibbonGroup>
        <DeviceBar>
          <DeviceButton $active aria-label="Desktop"><Device w={28} h={22} stand /></DeviceButton>
          <DeviceButton aria-label="Tablet landscape"><Device w={28} h={20} side /></DeviceButton>
          <DeviceButton aria-label="Tablet portrait"><Device w={20} h={28} /></DeviceButton>
          <DeviceButton aria-label="Phone landscape"><Device w={24} h={14} side /></DeviceButton>
          <DeviceButton aria-label="Phone portrait"><Device w={14} h={24} /></DeviceButton>
          <DeviceButton aria-label="Settings"><MdSettings size={21} color="#6f7f84" /></DeviceButton>
        </DeviceBar>
      </Ribbon>
      <Player>
        <Court />
        <Controls>
          <ControlButton $w={17} aria-label="Volume"><SpeakerIcon /></ControlButton>
          <PlayButton $w={55} aria-label="Play"><svg width="12" height="14" viewBox="0 0 12 14"><path d="M0 0l12 7-12 7z" fill="currentColor" /></svg></PlayButton>
          <SeekBar><Played style={{ width: "77.4%" }} /></SeekBar>
          <ControlButton $w={37} aria-label="Replay"><svg width="15" height="17" viewBox="0 0 15 17" fill="none" stroke="currentColor" strokeWidth="2"><path d="M13 7A6 6 0 1 1 7 4" /><path d="M7 0v8l6-4z" fill="currentColor" stroke="none" /></svg></ControlButton>
          <ControlButton $w={58} aria-label="Previous"><svg width="10" height="16" viewBox="0 0 10 16"><path d="M9 1L2 8l7 7" fill="none" stroke="currentColor" strokeWidth="2" /></svg></ControlButton>
          <ControlButton $w={39} aria-label="Next"><svg width="10" height="16" viewBox="0 0 10 16"><path d="M1 1l7 7-7 7" fill="none" stroke="currentColor" strokeWidth="2" /></svg></ControlButton>
        </Controls>
      </Player>
    </StoryWindow>
    <StatusBar>
      <span>Slide 8 of 16</span><span>"Untitled Slide"</span>
      <ViewButtons>
        <ViewButton aria-label="Grid"><svg width="13" height="10" viewBox="0 0 13 10" fill="currentColor"><path d="M0 0h5v4H0zM8 0h5v4H8zM0 6h5v4H0zM8 6h5v4H8z" /></svg></ViewButton>
        <ViewButton aria-label="Layout"><svg width="11" height="10" viewBox="0 0 11 10" fill="none" stroke="currentColor" strokeWidth="1.500"><path d="M1 1h9v8H1zM4 1v8" /><path d="M5.500 3h3v3h-3z" /></svg></ViewButton>
        <ViewButton $active aria-label="Preview"><svg width="11" height="10" viewBox="0 0 11 10" fill="none" stroke="currentColor" strokeWidth="1.200"><path d="M0 1h11M2 1.500V5h7V1.500M5.500 5v4M3 9h5" /></svg></ViewButton>
      </ViewButtons>
    </StatusBar>
    <Taskbar>
      <StartButton aria-label="Start"><StartOrb /></StartButton>
      <TaskButton aria-label="Explorer"><FolderIcon /></TaskButton>
      <TaskButton aria-label="Chrome"><ChromeIcon /></TaskButton>
      <TaskButton aria-label="Acrobat"><AdobeIcon /></TaskButton>
      <TaskButton aria-label="InDesign"><IdIcon>Id</IdIcon></TaskButton>
      <TaskButton $active aria-label="Storyline"><SlBadge $size={32}>sl</SlBadge></TaskButton>
      <TaskButton aria-label="Snipping Tool"><SnipIcon /></TaskButton>
      <Tray>
        <span>PT</span>
        <svg width="22" height="8" viewBox="0 0 22 8"><path d="M11 2l4 5H7z" fill="#fff" /></svg>
        <svg width="15" height="15" viewBox="0 0 15 15"><path d="M1 0v15" stroke="#fff" strokeWidth="1.500" /><path d="M3 3h5v6H3zM9 4l5 2v4l-5-2z" fill="#fff" /></svg>
        <svg width="15" height="15" viewBox="0 0 15 15" fill="none" stroke="#fff" strokeWidth="1.500"><path d="M3 2h11v8H3zM8 10v3M5 13.500h7M1 3v6" /></svg>
        <SpeakerIcon c="#fff" s={14} />
        <Clock><span>15:04</span><span>04/02/2019</span></Clock>
        <ShowDesktop aria-label="Show desktop" />
      </Tray>
    </Taskbar>
  </Screen>
);

const Acrobat = () => (
  <AcrobatScreen>
    <GlassBar>
      <SmallAdobe />
      <span>Adobe Acrobat Pro DC</span>
      <GlassButtons>
        <GlassButton $w={29} aria-label="Minimizar"><svg width="11" height="8" viewBox="0 0 11 8"><path d="M0 4h11v3H0z" fill="#fff" /></svg></GlassButton>
        <GlassButton $w={27} aria-label="Restaurar"><svg width="11" height="10" viewBox="0 0 11 10"><path d="M4 1h6v6M1 3h6v6H1z" fill="none" stroke="#fff" strokeWidth="2" /></svg></GlassButton>
        <GlassButton $w={45} aria-label="Fechar"><svg width="10" height="9" viewBox="0 0 10 9"><path d="M1 0l8 9M9 0L1 9" stroke="#fff" strokeWidth="2.500" /></svg></GlassButton>
      </GlassButtons>
    </GlassBar>
    <MenuBar>{["Arquivo", "Editar", "Visualizar", "Janela", "Ajuda"].map((m) => <span key={m}>{m}</span>)}</MenuBar>
    <AppBar>
      <AppTab $active>Início</AppTab>
      <AppTab>Ferramentas</AppTab>
      <SearchBox>
        <svg width="17" height="17" viewBox="0 0 17 17" fill="none" stroke="#6e6e6e" strokeWidth="1.800"><circle cx="6.500" cy="7" r="5.500" /><path d="M10 11l6 5" transform="matrix(1 0 0 1 0 0)" /></svg>
        <input placeholder="Pesquisar" aria-label="Pesquisar" />
      </SearchBox>
      <Help>?</Help>
      <svg width="24" height="24" viewBox="0 0 24 24"><circle cx="12" cy="12" r="12" fill="#00cdf9" /><path d="M8 14h15q-2 6-7 9l-5-2z" transform="matrix(1 0 0 -1 0 28)" fill="#00a2cc" /></svg>
    </AppBar>
    <Workspace>
      <Sidebar>
        <SideItem $active href="#">Recentes</SideItem>
        <SideItem href="#">Digitalizações</SideItem>
        <SideHeading>ARQUIVOS</SideHeading>
        <SideItem href="#">Meu computador</SideItem>
        <SideItem href="#">Document Cloud</SideItem>
        <SideItem href="#">Adicionar uma con...</SideItem>
        <SideHeading>COMPARTILHADOS</SideHeading>
        <SideItem href="#">Para visualização</SideItem>
        <SideItem href="#">Para revisão</SideItem>
        <SideItem href="#">Para assinatura</SideItem>
      </Sidebar>
      <Files>
        <Banner>
          <AcroMark />
          <span>Trabalhe em qualquer lugar com o aplicativo do Adobe Acrobat Reader. Faça anotações, assine e compartilhe PDFs em seu celular, e edite em tablets.</span>
          <PrimaryButton>Obter aplicativo</PrimaryButton>
          <button aria-label="Fechar aviso"><svg width="13" height="13" viewBox="0 0 13 13"><path d="M1 1l11 11M12 1L1 12" stroke="#6e6e6e" strokeWidth="2" /></svg></button>
        </Banner>
        <FilesHead>
          <h2>Recentes</h2>
          <LayoutButton $active aria-label="Lista"><svg width="17" height="17" viewBox="0 0 17 17"><path d="M0 2.500h17M0 8.500h17M0 14.500h17" stroke="#4b4b4b" strokeWidth="2" /><path d="M0 0h4v4H0zM0 6h4v4H0zM0 12h4v4H0z" fill="#4b4b4b" /></svg></LayoutButton>
          <LayoutButton aria-label="Grade"><svg width="17" height="17" viewBox="0 0 17 17" fill="#6e6e6e"><path d="M0 0h8v8H0zM9 0h8v8H9zM0 9h8v8H0zM9 9h8v8H9z" /></svg></LayoutButton>
        </FilesHead>
        <Scroller>
          <FileTable>
            <colgroup>
              <col style={{ width: 34 }} /><col style={{ width: 90 }} /><col /><col style={{ width: 468 }} /><col style={{ width: 258 }} />
            </colgroup>
            <thead>
              <tr><th><input type="checkbox" aria-label="Selecionar tudo" /></th><th /><th>NOME</th><th>ABERTO EM</th><th>TAMANHO</th></tr>
            </thead>
            <tbody>
              {files.map(([name, opened, size, kind]) => (
                <tr key={name}>
                  <td />
                  <ThumbCell>{kind < 0 ? <CertThumb /> : <DocThumb lines={kind} cover={kind === 0} />}</ThumbCell>
                  <td><FileName>{name}</FileName><FileKind>PDF</FileKind></td>
                  <Opened>{opened}</Opened>
                  <td>{size}</td>
                </tr>
              ))}
            </tbody>
          </FileTable>
          <FileScroll>
            <Arrow />
            <FileThumb><svg width="7" height="8" viewBox="0 0 7 8"><path d="M0 1h7M0 4h7M0 7h7" stroke="#555" /></svg></FileThumb>
            <Arrow $down />
          </FileScroll>
        </Scroller>
        <ClearRow><a href="#">Limpar recentes</a></ClearRow>
      </Files>
    </Workspace>
  </AcrobatScreen>
);

export default function App() {
  return (
    <>
      <Global />
      <Desktop>
        <Storyline />
        <Acrobat />
      </Desktop>
    </>
  );
}
